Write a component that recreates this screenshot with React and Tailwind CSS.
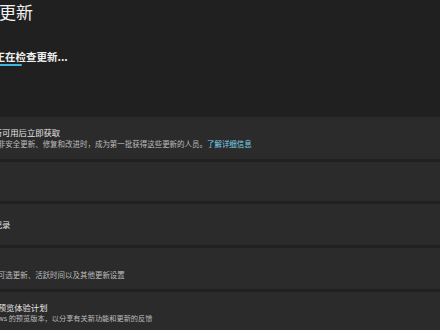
import React from "react";

const font = { fontFamily: '"Noto Sans CJK SC", "Microsoft YaHei", sans-serif' };

const Card = ({ height, title, sub, subSize = "text-[7.47px]", link }) => (
  <div className={`bg-[#2b2b2b] flex flex-col justify-center overflow-hidden ${height}`}>
    <div className="ml-[-39.5px]">
      {title && (
        <div className="text-[8.3px] leading-[11px] text-[#e6e6e6] whitespace-nowrap">
          {title}
        </div>
      )}
      {sub && (
        <div className={`${subSize} leading-[11px] text-[#bdbdbd] whitespace-nowrap`}>
          {sub}
          {link && <span className="text-[#7fd6ee]">{link}</span>}
        </div>
      )}
    </div>
  </div>
);

export default function App() {
  return (
    <div
      className="w-[440px] h-[330px] bg-[#202020] overflow-hidden text-white"
      style={font}
    >
      <div className="pt-[3px] ml-[-1px] text-[17px] leading-[17px] text-[#f2f2f2] whitespace-nowrap">
        更新
      </div>
      <div className="mt-[31px] ml-[-5.5px] text-[10.5px] leading-[11px] font-semibold text-[#f0f0f0] whitespace-nowrap">
        正在检查更新...
      </div>
      <div className="mt-[2px] h-[2px] w-[22px] rounded-r-full bg-[#3fb6dc]" />
      <div className="mt-[51px] flex flex-col gap-[3px]">
        <Card
          height="h-[42px]"
          title="在最新更新可用后立即获取"
          sub="获取最新的非安全更新、修复和改进时，成为第一批获得这些更新的人员。"
          link="了解详细信息"
        />
        <Card height="h-[39px]" />
        <Card height="h-[41px]" title="更新历史记录" />
        <Card
          height="h-[41px]"
          title="高级选项"
          sub="传递优化、可选更新、活跃时间以及其他更新设置"
        />
        <Card
          height="h-[41px]"
          title="Windows 预览体验计划"
          sub="获取 Windows 的预览版本，以分享有关新功能和更新的反馈"
          subSize="text-[7.2px]"
        />
      </div>
    </div>
  );
}
